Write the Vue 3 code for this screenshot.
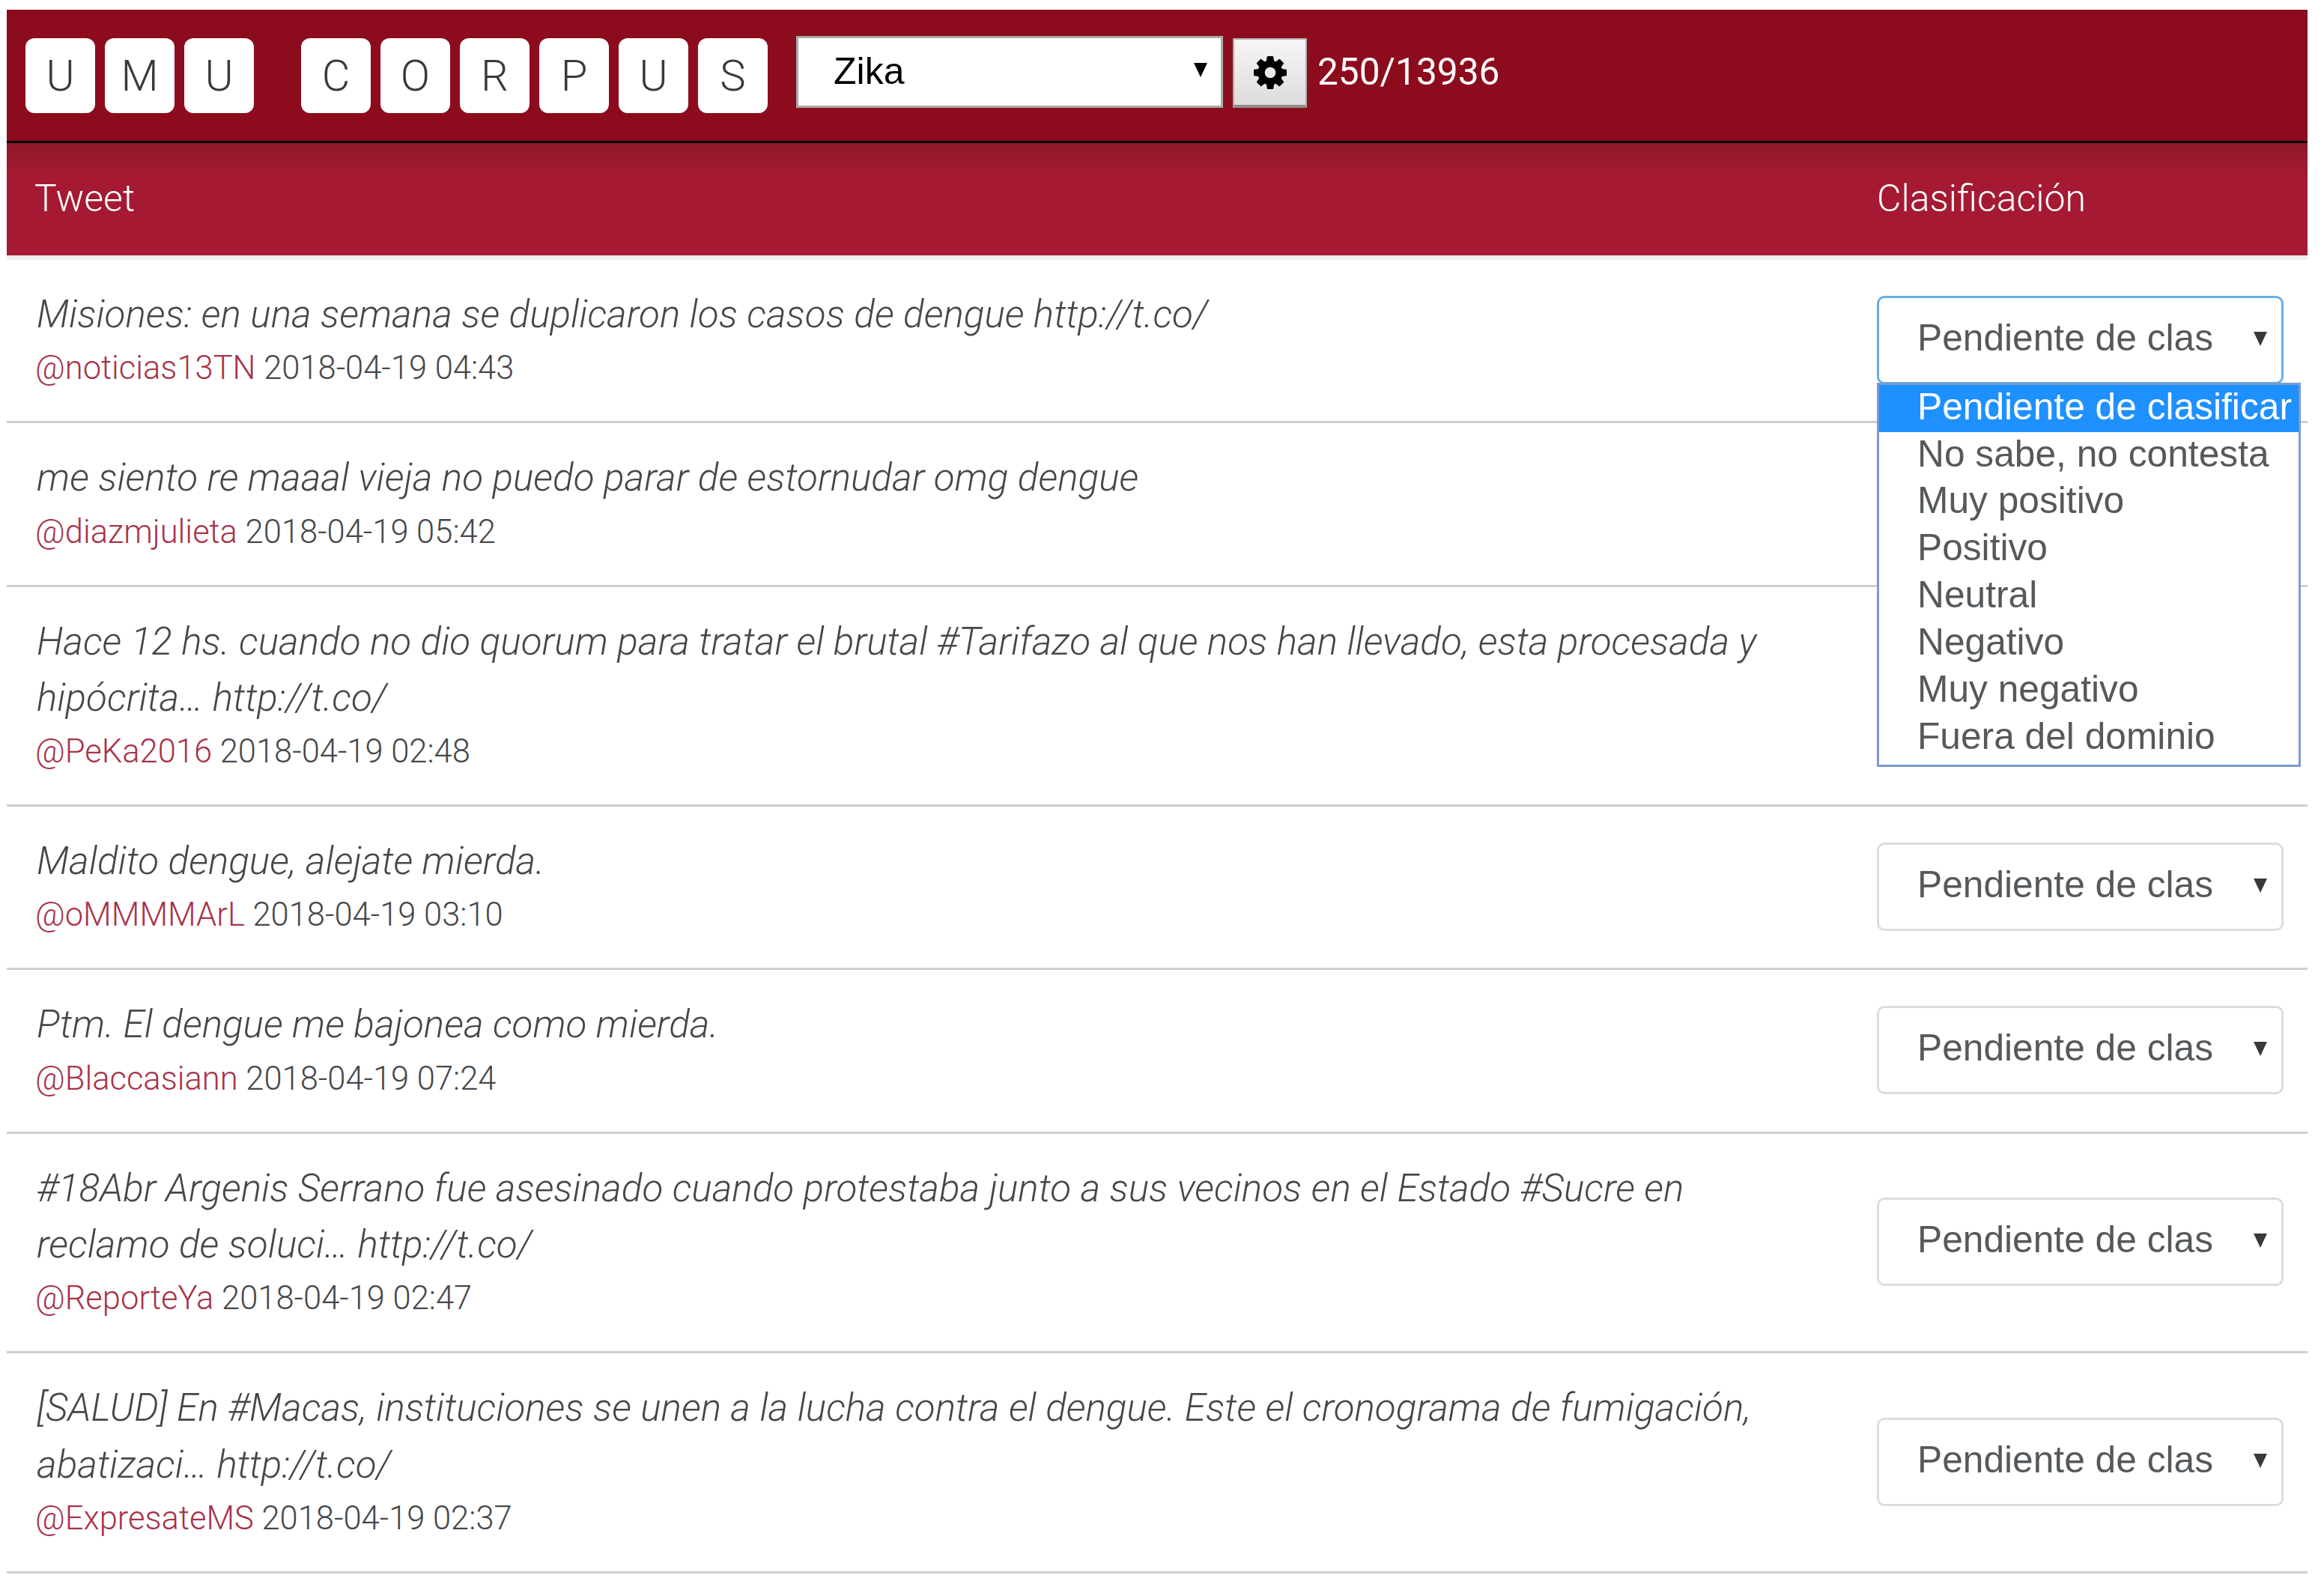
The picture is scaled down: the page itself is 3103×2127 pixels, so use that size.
<script setup>
const umu = ['U', 'M', 'U']
const corpus = ['C', 'O', 'R', 'P', 'U', 'S']
const options = ['Pendiente de clasificar', 'No sabe, no contesta', 'Muy positivo', 'Positivo', 'Neutral', 'Negativo', 'Muy negativo', 'Fuera del dominio']
const tweets = [
  { text: 'Misiones: en una semana se duplicaron los casos de dengue http://t.co/', user: '@noticias13TN', date: '2018-04-19 04:43', open: true },
  { text: 'me siento re maaal vieja no puedo parar de estornudar omg dengue', user: '@diazmjulieta', date: '2018-04-19 05:42', hidden: true },
  { text: 'Hace 12 hs. cuando no dio quorum para tratar el brutal #Tarifazo al que nos han llevado, esta procesada y hipócrita… http://t.co/', user: '@PeKa2016', date: '2018-04-19 02:48', hidden: true },
  { text: 'Maldito dengue, alejate mierda.', user: '@oMMMMArL', date: '2018-04-19 03:10' },
  { text: 'Ptm. El dengue me bajonea como mierda.', user: '@Blaccasiann', date: '2018-04-19 07:24' },
  { text: '#18Abr Argenis Serrano fue asesinado cuando protestaba junto a sus vecinos en el Estado #Sucre en reclamo de soluci… http://t.co/', user: '@ReporteYa', date: '2018-04-19 02:47' },
  { text: '[SALUD] En #Macas, instituciones se unen a la lucha contra el dengue. Este el cronograma de fumigación, abatizaci… http://t.co/', user: '@ExpresateMS', date: '2018-04-19 02:37' }
]
</script>

<template>
  <div class="page">
    <header class="topbar">
      <div class="letters">
        <span v-for="(l, i) in umu" :key="'u' + i" class="letter">{{ l }}</span>
      </div>
      <div class="letters second">
        <span v-for="(l, i) in corpus" :key="'c' + i" class="letter">{{ l }}</span>
      </div>
      <div class="corpus-select">
        <span>Zika</span>
        <i class="arrow black"></i>
      </div>
      <button class="gear" type="button" aria-label="Ajustes">
        <svg viewBox="0 0 1536 1536" width="44" height="44">
          <path fill="#000" d="M1024 768q0-106-75-181t-181-75-181 75-75 181 75 181 181 75 181-75 75-181zm512-109v222q0 12-8 23t-20 13l-185 28q-19 54-39 91 35 50 107 138 10 12 10 25t-9 23q-27 37-99 108t-94 71q-12 0-26-9l-138-108q-44 23-91 38-16 136-29 186-7 28-36 28h-222q-14 0-24.500-8.500t-11.500-21.500l-28-184q-49-16-90-37l-141 107q-10 9-25 9-14 0-25-11-126-114-165-168-7-10-7-23 0-12 8-23 15-21 51-66.500t54-70.500q-27-50-41-99l-183-27q-13-2-21-12.500t-8-23.500v-222q0-12 8-23t19-13l186-28q14-46 39-92-40-57-107-138-10-12-10-24 0-10 9-23 26-36 98.500-107.500t94.500-71.500q13 0 26 10l138 107q44-23 91-38 16-136 29-186 7-28 36-28h222q14 0 24.500 8.500t11.500 21.500l28 184q49 16 90 37l142-107q9-9 24-9 13 0 25 10 129 119 165 170 7 8 7 22 0 12-8 23-15 21-51 66.500t-54 70.500q26 50 41 98l183 28q13 2 21 12.500t8 23.500z"/>
        </svg>
      </button>
      <span class="count">250/13936</span>
    </header>

    <div class="table-head">
      <div class="col-main">Tweet</div>
      <div class="col-side">Clasificación</div>
    </div>

    <article v-for="t in tweets" :key="t.user" class="row">
      <div class="col-main">
        <p class="tweet">{{ t.text }}</p>
        <p class="meta"><a class="user">{{ t.user }}</a> {{ t.date }}</p>
      </div>
      <div class="col-side">
        <div v-if="!t.hidden" class="class-select" :class="{ focused: t.open }">
          <span>Pendiente de clas</span>
          <i class="arrow"></i>
          <ul v-if="t.open" class="dropdown">
            <li v-for="(o, i) in options" :key="o" :class="{ selected: i === 0 }">{{ o }}</li>
          </ul>
        </div>
      </div>
    </article>
  </div>
</template>

<style scoped>
.page {
  padding: 13px 22px 0 9px;
  font-family: Roboto, "Liberation Sans", sans-serif;
  font-weight: 300;
  color: #45484a;
}
.topbar {
  display: flex;
  align-items: flex-start;
  height: 178px;
  box-sizing: border-box;
  padding: 35px 0 0 25px;
  background: #8c0c1e;
  border-bottom: 3px solid #000;
}
.letters {
  display: flex;
  gap: 13px;
  margin-top: 3px;
}
.second {
  margin-left: 63px;
}
.letter {
  width: 93px;
  height: 100px;
  display: flex;
  align-items: center;
  justify-content: center;
  border-radius: 12px;
  background: #fff;
  font-size: 58px;
  color: #373a3c;
}
.corpus-select {
  position: relative;
  width: 570px;
  height: 96px;
  margin-left: 38px;
  box-sizing: border-box;
  border: 3px solid #a9a9a9;
  background: #fff;
  padding-left: 47px;
  font: 400 50px/88px "Liberation Sans", sans-serif;
  color: #000;
}
.arrow {
  position: absolute;
  right: 19px;
  top: 45px;
  width: 0;
  height: 0;
  border-left: 9px solid transparent;
  border-right: 9px solid transparent;
  border-top: 19px solid #373a3c;
}
.arrow.black {
  border-top-color: #000;
  right: 18px;
  top: 33px;
}
.gear {
  width: 99px;
  height: 93px;
  margin: 3px 0 0 13px;
  padding: 0;
  display: flex;
  align-items: center;
  justify-content: center;
  box-sizing: border-box;
  border: 2px solid #b0b0b0;
  border-bottom: 4px solid #8f8f8f;
  background: linear-gradient(#f6f6f6, #dcdcdc);
}
.count {
  margin-left: 14px;
  margin-top: 10px;
  font-size: 49.6px;
  line-height: 76px;
  font-weight: 400;
  color: #fff;
}
.table-head {
  display: flex;
  align-items: center;
  height: 156px;
  box-sizing: border-box;
  padding-bottom: 3px;
  background: linear-gradient(#8f1729, #a51a32 30%);
  border-bottom: 6px solid #eceeef;
  color: #fff;
  font-size: 50px;
  font-weight: 300;
}
.col-main {
  flex: 1;
  min-width: 0;
  padding-left: 37px;
  padding-right: 120px;
}
.col-side {
  flex: none;
  width: 575px;
}
.row {
  display: flex;
  align-items: center;
  padding: 35px 0 36px;
  border-bottom: 3px solid #cfcfcf;
}
.row .col-main {
  padding-left: 40px;
}
.row .col-side {
  margin-bottom: 1px;
}
.tweet {
  margin: 0;
  font-size: 51.3px;
  line-height: 75.3px;
  font-style: italic;
}
.meta {
  margin: 0 0 0 -2px;
  font-size: 43.5px;
  line-height: 69px;
}
.user {
  color: #a83348;
}
.class-select {
  position: relative;
  width: 543px;
  height: 118px;
  box-sizing: border-box;
  border: 3px solid #ddd;
  border-radius: 10px;
  padding-left: 51px;
  background: #fff;
  font: 400 49.7px/107px "Liberation Sans", sans-serif;
  color: #55595c;
}
.class-select.focused {
  border-color: #66afe9;
}
.dropdown {
  position: absolute;
  z-index: 2;
  left: -3px;
  top: 113px;
  width: 566px;
  height: 513px;
  box-sizing: border-box;
  margin: 0;
  padding: 0;
  list-style: none;
  background: #fff;
  border: 3px solid #7a9bd0;
}
.dropdown li {
  height: 62.9px;
  padding-left: 51px;
  line-height: 58px;
  white-space: nowrap;
}
.dropdown li.selected {
  background: #1e90ff;
  color: #fff;
}
</style>

<style>
html, body {
  background: #fff;
}
</style>
